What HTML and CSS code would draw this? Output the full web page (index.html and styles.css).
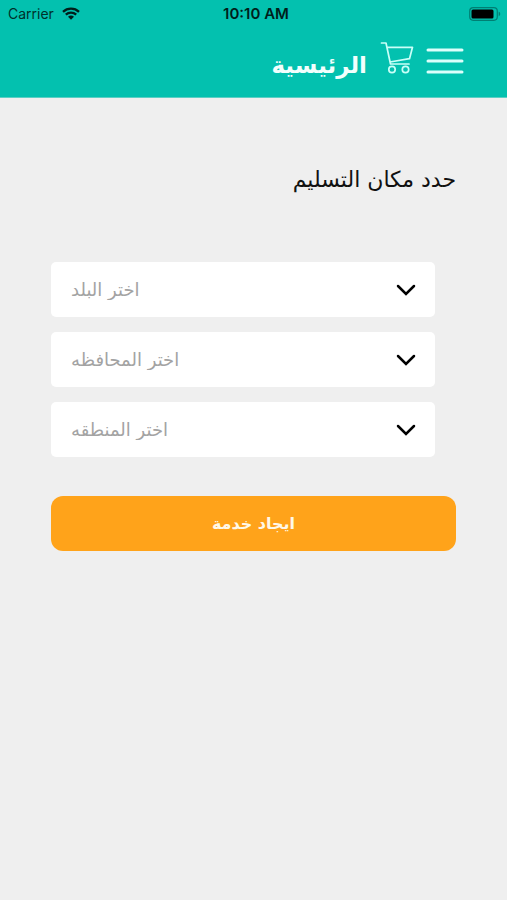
FILE: index.html
```html
<!DOCTYPE html>
<html lang="ar">
<head>
<meta charset="utf-8">
<meta name="viewport" content="width=device-width, initial-scale=1">
<title>الرئيسية</title>
<link rel="stylesheet" href="styles.css">
</head>
<body>
<header class="top">
  <div class="status">
    <div class="carrier">
      <span>Carrier</span>
      <svg class="wifi" viewBox="0 0 18 13" aria-hidden="true">
        <path d="M1 4.800C5.500.6 12.500.6 17 4.800M3.800 7.600c3-2.700 7.400-2.700 10.400 0" fill="none" stroke="#001f1b" stroke-width="2.300"/>
        <path d="M6 9.800c1.800-1.600 4.200-1.600 6 0L9 12.800z" fill="#001f1b"/>
      </svg>
    </div>
    <span class="time">10:10 AM</span>
    <svg class="battery" viewBox="0 0 32 14" aria-hidden="true">
      <rect x=".7" y=".7" width="27.600" height="12.600" rx="3.500" fill="none" stroke="#007f73" stroke-width="1.200"/>
      <rect x="2.500" y="2.500" width="22" height="9" rx="1.500" fill="#000"/>
      <path d="M29.700 4.800c2 .6 2 3.800 0 4.400z" fill="#007f73"/>
    </svg>
  </div>
  <nav class="bar" dir="rtl">
    <button class="icon-button" type="button" aria-label="القائمة">
      <svg class="menu" viewBox="0 0 38 28" aria-hidden="true">
        <path d="M2 3h34M2 14h34M2 25h34" stroke="#dcfffb" stroke-width="3" stroke-linecap="round"/>
      </svg>
    </button>
    <a class="cart-link" href="#cart" aria-label="السلة">
      <svg class="cart" viewBox="0 0 34 34" fill="none" stroke="#c9fff8" stroke-width="1.700" stroke-linecap="round" stroke-linejoin="round" aria-hidden="true">
        <path d="M1.500 2H6l4.500 21H29M6.900 6.300H32.500l-3 11.400L10 21"/>
        <circle cx="12" cy="28.500" r="3.200"/>
        <circle cx="25.500" cy="28.500" r="3.200"/>
      </svg>
    </a>
    <h1 class="title">الرئيسية</h1>
  </nav>
</header>
<main class="content">
  <h2 class="heading" dir="rtl">حدد مكان التسليم</h2>
  <form>
    <div class="fields">
      <div class="field">
        <select class="select" aria-label="البلد"><option>اختر البلد</option></select>
        <svg class="chevron" viewBox="0 0 20 12" aria-hidden="true"><path d="M2 2l8 8 8-8"/></svg>
      </div>
      <div class="field">
        <select class="select" aria-label="المحافظه"><option>اختر المحافظه</option></select>
        <svg class="chevron" viewBox="0 0 20 12" aria-hidden="true"><path d="M2 2l8 8 8-8"/></svg>
      </div>
      <div class="field">
        <select class="select" aria-label="المنطقه"><option>اختر المنطقه</option></select>
        <svg class="chevron" viewBox="0 0 20 12" aria-hidden="true"><path d="M2 2l8 8 8-8"/></svg>
      </div>
    </div>
    <button class="submit" type="button" dir="rtl">ايجاد خدمة</button>
  </form>
</main>
</body>
</html>
```
FILE: styles.css
```css
* {
  box-sizing: border-box;
}

body {
  margin: 0;
  min-height: 100vh;
  background: #efefef;
  color: #111;
  font-family: "DejaVu Sans", sans-serif;
}

.top {
  background: #03c1af;
  padding-bottom: 10px;
  border-bottom: 1px solid #5ccfc4;
}

.status {
  display: grid;
  grid-template-columns: 1fr auto 1fr;
  align-items: center;
  height: 27px;
  padding: 0 6px 0 8px;
  color: #00302b;
  font-family: Inter, "Liberation Sans", sans-serif;
  font-size: 14px;
}

.carrier {
  display: flex;
  align-items: center;
  gap: 8px;
}

.wifi {
  width: 18px;
  height: 13px;
}

.time {
  padding-left: 3px;
  color: #001f1b;
  font-size: 15px;
  font-weight: 600;
}

.battery {
  justify-self: end;
  width: 32px;
  height: 14px;
}

.bar {
  display: flex;
  align-items: center;
  height: 60px;
  padding: 0 43px;
}

.icon-button {
  padding: 8px 0 0;
  border: 0;
  background: none;
}

.menu,
.cart {
  display: block;
}

.menu {
  width: 38px;
  height: 28px;
}

.cart-link {
  margin: 2px 12px 0 13px;
}

.cart {
  width: 34px;
  height: 34px;
}

.title {
  margin: 0;
  padding-top: 16px;
  color: #f2fffd;
  font-size: 23px;
  line-height: 32px;
}

.content {
  padding: 64px 51px;
}

.heading {
  margin: 0 0 64px;
  font-size: 22px;
  font-weight: 400;
  line-height: 36px;
}

.fields {
  display: grid;
  gap: 15px;
  margin: 0 21px 39px 0;
}

.field {
  position: relative;
}

.select {
  display: block;
  width: 100%;
  height: 55px;
  padding: 0 56px 0 20px;
  border: 0;
  border-radius: 5px;
  appearance: none;
  background: #fff;
  color: #a3a3a3;
  font-family: inherit;
  font-size: 18px;
}

.chevron {
  position: absolute;
  top: 22px;
  right: 19px;
  width: 20px;
  height: 12px;
  fill: none;
  stroke: #000;
  stroke-width: 2.5;
  stroke-linecap: round;
  pointer-events: none;
}

.submit {
  display: block;
  width: 100%;
  height: 55px;
  border: 0;
  border-radius: 12px;
  background: #ffa31a;
  color: #fff8e8;
  font-family: inherit;
  font-size: 16px;
  font-weight: 700;
}
```
